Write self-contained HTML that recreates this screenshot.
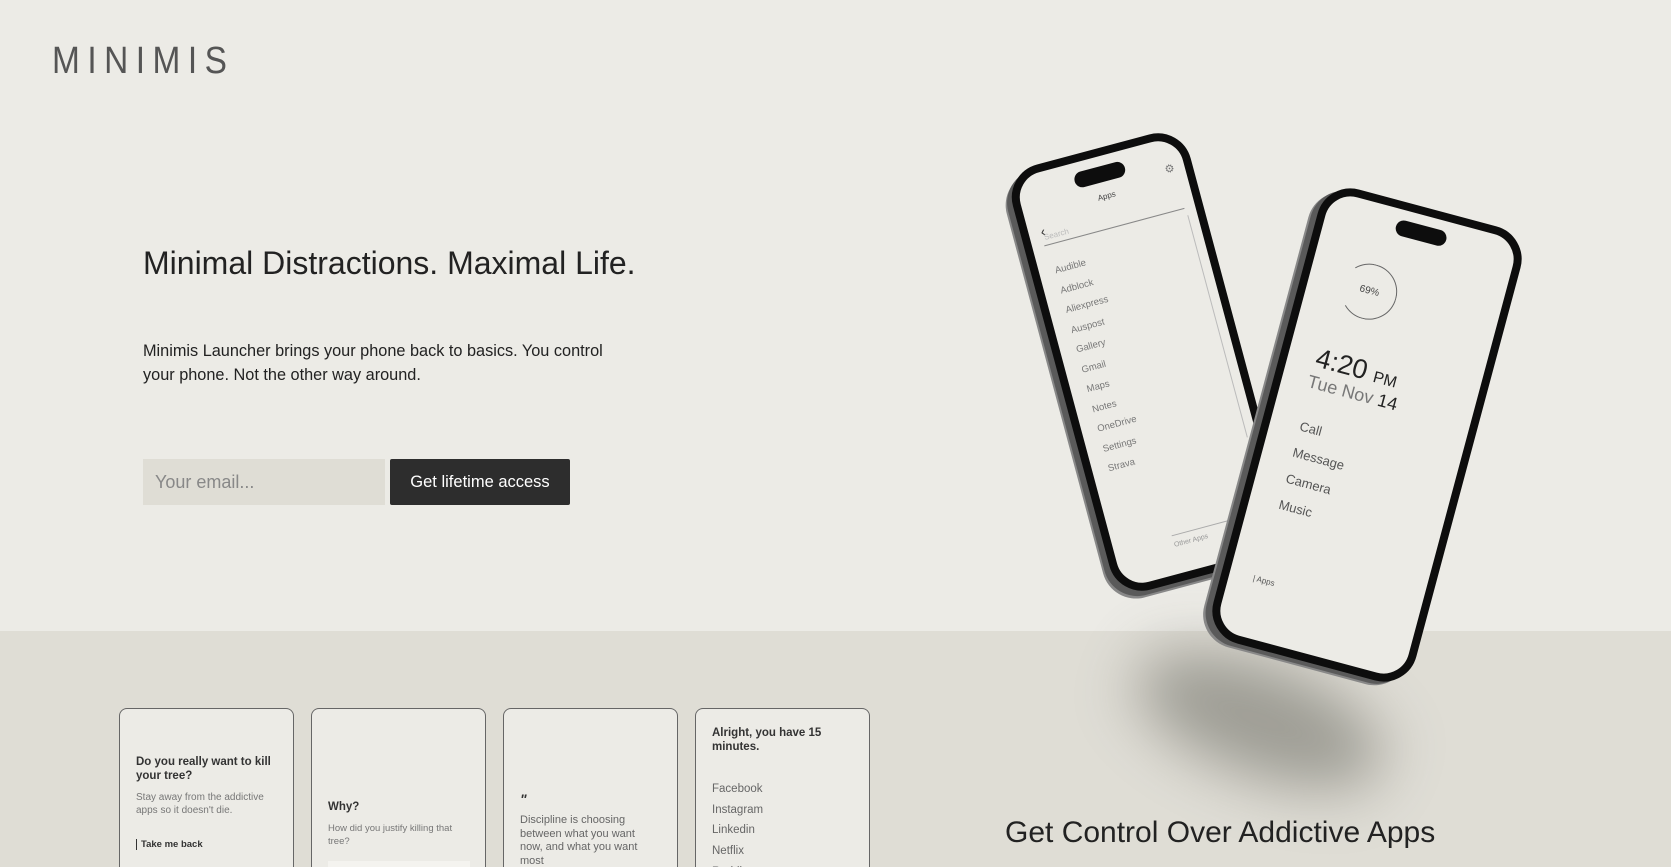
<!DOCTYPE html>
<html style="overflow:hidden;width:1671px;height:867px"><head><meta charset="utf-8"><style>
*{margin:0;padding:0;box-sizing:border-box}
body{width:1671px;height:867px;overflow:hidden;background:#ecebe6;font-family:"Liberation Sans",sans-serif;color:#222;position:relative}
.abs{position:absolute}
.logo{left:52px;top:40px;font-size:38px;letter-spacing:8.5px;color:#555;transform:scaleX(0.88);transform-origin:left}
.low{left:0;top:631px;width:1671px;height:236px;background:#dfddd5}
.card{top:708px;width:175px;height:159px;border:1px solid #666;border-bottom:none;border-radius:8px 8px 0 0;background:#ecebe6;font-size:11px;color:#333;overflow:hidden}
.card b{font-size:11.5px;color:#333}
.gray{color:#777;font-size:10px;line-height:13px}
.phone{border:8px solid #0d0d0d;border-radius:34px;background:#ecebe6;box-shadow:-6px 4px 0 #5a5a5a,-8px 6px 0 #888}
.pill{position:absolute;left:50%;top:10px;width:52px;height:16px;margin-left:-26px;background:#0d0d0d;border-radius:10px}
.ph{position:absolute;color:#777;font-size:11px}
</style></head><body>
<div class="abs logo">MINIMIS</div>
<div class="abs" style="left:143px;top:245px;font-size:32px;color:#222">Minimal Distractions. Maximal Life.</div>
<div class="abs" style="left:143px;top:339px;font-size:16.3px;line-height:24px;color:#222;width:478px">Minimis Launcher brings your phone back to basics. You control your phone. Not the other way around.</div>
<div class="abs" style="left:143px;top:459px;width:242px;height:46px;background:#dfddd5;color:#888;font-size:18px;padding:13px 12px">Your email...</div>
<div class="abs" style="left:390px;top:459px;width:180px;height:46px;background:#2d2d2d;color:#fff;font-size:16.5px;text-align:center;line-height:46px;border-radius:2px">Get lifetime access</div>

<div class="abs low"></div>
<div class="abs" style="left:1130px;top:665px;width:260px;height:110px;border-radius:50%;background:#8d8c84;filter:blur(30px);transform:rotate(20deg);opacity:.8"></div>

<!-- left phone -->
<div class="abs phone" style="left:1058px;top:142px;width:184px;height:440px;transform:rotate(-15deg)">
<div class="pill"></div>
<div class="ph" style="left:76px;top:36px;font-size:8px;color:#444">Apps</div>
<div class="ph" style="left:148px;top:24px;font-size:11px">⚙</div>
<div class="ph" style="left:12px;top:50px;font-size:14px;color:#333">‹</div>
<div class="ph" style="left:14px;top:60px;font-size:8px;color:#bbb">Search</div>
<div class="abs" style="left:12px;top:72px;width:145px;height:1px;background:#888"></div>
<div class="abs" style="left:158px;top:80px;width:1px;height:230px;background:#bbb"></div>
<div class="ph" style="left:16px;top:90px;line-height:20.5px;font-size:9.5px">Audible<br>Adblock<br>Aliexpress<br>Auspost<br>Gallery<br>Gmail<br>Maps<br>Notes<br>OneDrive<br>Settings<br>Strava</div>
<div class="abs" style="left:60px;top:385px;width:90px;height:1px;background:#aaa"></div>
<div class="ph" style="left:60px;top:392px;font-size:7px;color:#999">Other Apps</div>
</div>

<!-- right phone -->
<div class="abs phone" style="left:1262px;top:200px;width:210px;height:470px;transform:rotate(15deg)">
<div class="pill"></div>
<div class="abs" style="left:34px;top:60px;width:56px;height:56px;border-radius:50%;border:1px solid #666;border-left-color:transparent"></div>
<div class="ph" style="left:52px;top:82px;font-size:10px;color:#444">69%</div>
<div class="ph" style="left:28px;top:150px;font-size:27px;color:#222">4:20 <span style="font-size:16px">PM</span></div>
<div class="ph" style="left:26px;top:180px;font-size:18px;color:#777">Tue Nov <span style="color:#222">14</span></div>
<div class="ph" style="left:30px;top:222px;font-size:13px;line-height:27px;color:#555">Call<br>Message<br>Camera<br>Music</div>
<div class="ph" style="left:24px;top:390px;font-size:8px;color:#555">| Apps</div>
</div>

<!-- cards -->
<div class="abs card" style="left:119px">
<div class="abs" style="left:16px;top:46px;width:140px;line-height:14px"><b>Do you really want to kill your tree?</b></div>
<div class="abs gray" style="left:16px;top:82px;width:135px">Stay away from the addictive apps so it doesn't die.</div>
<div class="abs" style="left:16px;top:130px;font-size:9.5px;font-weight:bold;border-left:1px solid #333;padding-left:4px">Take me back</div>
</div>
<div class="abs card" style="left:311px">
<div class="abs" style="left:16px;top:92px"><b>Why?</b></div>
<div class="abs gray" style="left:16px;top:113px;width:140px;font-size:9.5px">How did you justify killing that tree?</div>
<div class="abs" style="left:16px;top:152px;width:142px;height:10px;background:#f4f3ef"></div>
</div>
<div class="abs card" style="left:503px">
<div class="abs" style="left:16px;top:82px;font-size:14px;font-weight:bold;font-style:italic">"</div>
<div class="abs" style="left:16px;top:105px;width:130px;color:#666;font-size:11px;line-height:13.5px">Discipline is choosing between what you want now, and what you want most</div>
</div>
<div class="abs card" style="left:695px">
<div class="abs" style="left:16px;top:17px;width:135px;line-height:14px"><b>Alright, you have 15 minutes.</b></div>
<div class="abs" style="left:16px;top:70px;color:#666;font-size:11.5px;line-height:20.7px">Facebook<br>Instagram<br>Linkedin<br>Netflix<br>Reddit</div>
</div>

<div class="abs" style="left:1005px;top:816px;font-size:30px;color:#222">Get Control Over Addictive Apps</div>
</body></html>
